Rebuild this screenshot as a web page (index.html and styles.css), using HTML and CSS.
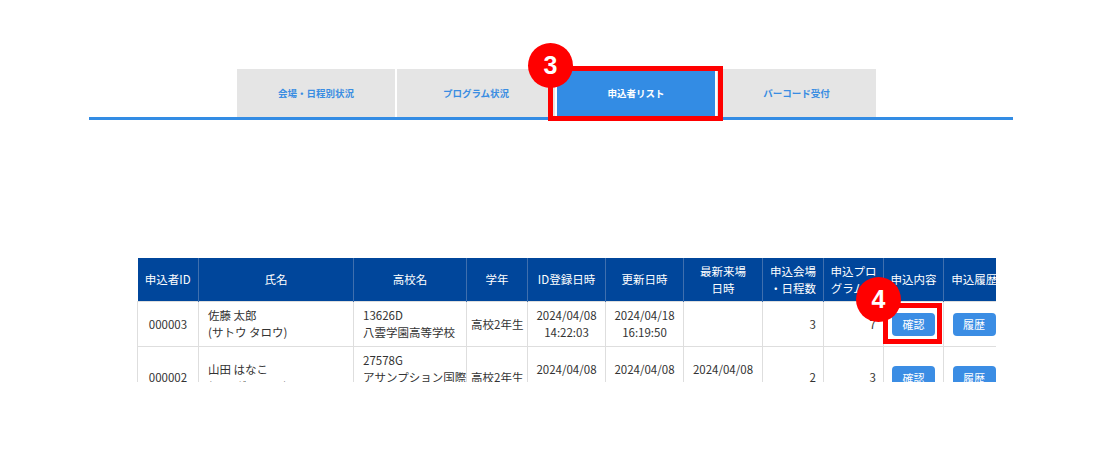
FILE: index.html
```html
<!DOCTYPE html>
<html lang="ja">
<head>
    <meta charset="UTF-8">
    <meta name="viewport" content="width=device-width, initial-scale=1.0">
    <title>申込者リスト</title>
    <link rel="stylesheet" href="styles.css">
</head>
<body>
    <nav class="tabs-bar">
        <ul class="tabs">
            <li class="tab">会場・日程別状況</li>
            <li class="tab">プログラム状況</li>
            <li class="tab active">申込者リスト
                <span class="callout-box tab-box"></span>
                <span class="callout-num tab-num">3</span>
            </li>
            <li class="tab">バーコード受付</li>
        </ul>
    </nav>

    <div class="list-wrap">
        <table class="applicants">
            <colgroup>
                <col style="width:61px">
                <col style="width:155px">
                <col style="width:113px">
                <col style="width:61px">
                <col style="width:78px">
                <col style="width:78px">
                <col style="width:79px">
                <col style="width:61px">
                <col style="width:60px">
                <col style="width:60px">
                <col style="width:61px">
            </colgroup>
            <thead>
                <tr>
                    <th>申込者ID</th>
                    <th>氏名</th>
                    <th>高校名</th>
                    <th>学年</th>
                    <th>ID登録日時</th>
                    <th>更新日時</th>
                    <th>最新来場<br>日時</th>
                    <th>申込会場<br>・日程数</th>
                    <th>申込プロ<br>グラム数</th>
                    <th>申込内容</th>
                    <th>申込履歴</th>
                </tr>
            </thead>
            <tbody>
                <tr>
                    <td class="c">000003</td>
                    <td>佐藤 太郎<br>(サトウ タロウ)</td>
                    <td>13626D<br>八雲学園高等学校</td>
                    <td class="c">高校2年生</td>
                    <td class="c">2024/04/08<br>14:22:03</td>
                    <td class="c">2024/04/18<br>16:19:50</td>
                    <td class="c"></td>
                    <td class="r">3</td>
                    <td class="r">7</td>
                    <td class="c">
                        <span class="mark">
                            <button class="btn">確認</button>
                            <span class="callout-box btn-box"></span>
                            <span class="callout-num btn-num">4</span>
                        </span>
                    </td>
                    <td class="c"><button class="btn">履歴</button></td>
                </tr>
                <tr>
                    <td class="c">000002</td>
                    <td>山田 はなこ<br>(ヤマダ ハナコ)</td>
                    <td>27578G<br>アサンプション国際<br>高等学校</td>
                    <td class="c">高校2年生</td>
                    <td class="c">2024/04/08<br>10:05:12</td>
                    <td class="c">2024/04/08<br>10:05:12</td>
                    <td class="c">2024/04/08<br>11:30:45</td>
                    <td class="r">2</td>
                    <td class="r">3</td>
                    <td class="c"><button class="btn">確認</button></td>
                    <td class="c"><button class="btn">履歴</button></td>
                </tr>
            </tbody>
        </table>
    </div>
</body>
</html>
```

FILE: styles.css
```css
body {
    margin: 0;
    font-family: "Noto Sans CJK JP", "Noto Sans", sans-serif;
    background: #fff;
    color: #333;
}

/* タブ */
.tabs-bar {
    width: 924px;
    margin-left: 89px;
    padding-top: 69px;
    border-bottom: 3px solid #338ce4;
}
.tabs {
    list-style: none;
    margin: 0 0 0 148px;
    padding: 0;
    display: flex;
    gap: 2px;
}
.tab {
    position: relative;
    width: 158px;
    height: 48px;
    display: flex;
    align-items: center;
    justify-content: center;
    background: #e5e5e5;
    color: #3a8de2;
    font-size: 9.5px;
    font-weight: bold;
}
.tab:last-child {
    width: 159px;
}
.tab.active {
    background: #338ce4;
    color: #fff;
}

/* 注釈 */
.callout-box {
    position: absolute;
    z-index: 5;
    border: 5px solid #f00;
    box-sizing: border-box;
}
.callout-num {
    position: absolute;
    z-index: 6;
    width: 45px;
    height: 45px;
    border-radius: 50%;
    background: #f00;
    color: #fff;
    font-family: "Liberation Sans", Arial, sans-serif;
    font-size: 25px;
    font-weight: bold;
    display: flex;
    align-items: center;
    justify-content: center;
}
.tab-box {
    left: -9px;
    top: -3px;
    width: 175px;
    height: 55px;
}
.tab-num {
    left: -29px;
    top: -26px;
}

/* テーブル */
.list-wrap {
    width: 859px;
    height: 124px;
    margin: 138px 0 0 137px;
    overflow: hidden;
}
.applicants {
    table-layout: fixed;
    width: 867px;
    border-collapse: collapse;
    font-size: 11.5px;
    line-height: 17px;
}
.applicants th {
    height: 43px;
    padding: 0 4px;
    background: #00469b;
    color: #fff;
    font-weight: normal;
    border-left: 1px solid #3f6fae;
    white-space: nowrap;
}
.applicants th:first-child {
    border-left: none;
}
.applicants td {
    padding: 5px 4px 5px 9px;
    border: 1px solid #dedede;
    white-space: nowrap;
    vertical-align: middle;
}
.applicants td.c {
    text-align: center;
    padding: 5px 4px;
}
.applicants td.r {
    text-align: right;
    padding: 5px 7px 5px 4px;
}

.mark {
    position: relative;
    display: inline-block;
}
.btn {
    display: block;
    width: 43px;
    height: 23px;
    margin: 0 auto;
    padding: 0;
    border: none;
    border-radius: 4px;
    background: #3b8de4;
    color: #fff;
    font-family: inherit;
    font-size: 11px;
    cursor: pointer;
}
.btn-box {
    left: -9px;
    top: -10px;
    width: 59px;
    height: 41px;
}
.btn-num {
    left: -36px;
    top: -36px;
}
```
